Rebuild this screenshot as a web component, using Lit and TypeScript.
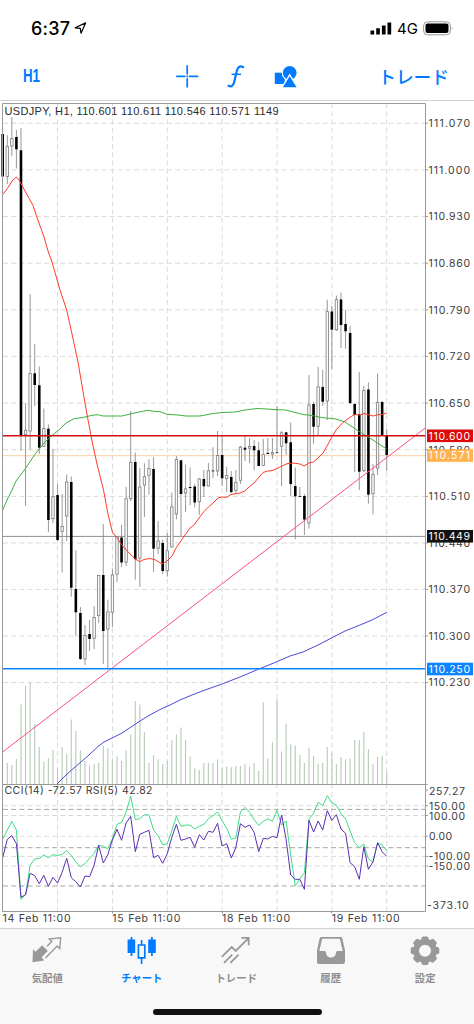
import { LitElement, html, svg, css } from "lit";
import { customElement, property } from "lit/decorators.js";

const STEP = 4.5715;
const X0 = 2.7;
const cx = (i: number) => X0 + i * STEP;

// [high, open/close top, open/close bottom, low, filled]
type Candle = [number, number, number, number, number];
const CANDLES: Candle[] = [
  [134, 134, 176.5, 176.5, 1], [135.3, 146, 176.7, 184, 0], [117, 138.3, 146.3, 156.3, 0], [130, 137, 149.3, 168.5, 1],
  [128, 150.3, 435, 450.7, 1], [403, 430.3, 435, 506, 0], [294, 373.3, 431.3, 449.5, 0], [344, 373.3, 385, 406, 1],
  [366.5, 385.3, 447.7, 454, 1], [408.5, 428.3, 446.7, 446.7, 0], [424.7, 428.7, 520, 532, 1], [449, 496.3, 519, 523, 0],
  [484, 495, 540, 541, 1], [494, 526, 531.7, 572.5, 0], [474.5, 481.7, 516.3, 541, 0], [476.5, 482, 587.7, 596.7, 1],
  [550.3, 589, 612.3, 636, 1], [607, 613, 659, 660, 1], [625, 635.3, 659.3, 665, 0], [620, 634, 639, 651, 1],
  [606, 617.3, 638.5, 649, 0], [575, 575.3, 615.7, 623, 0], [524, 575, 631, 664, 1], [599.7, 611.5, 629.3, 669, 0],
  [568.5, 574.7, 612.5, 627, 0], [536, 536.7, 574.5, 582, 0], [525, 537.5, 562.5, 567, 1], [487, 498.5, 562.5, 566, 0],
  [411, 462, 499, 501, 0], [452.5, 462, 559.3, 579.7, 1], [468, 486.7, 558.5, 587, 0], [463.3, 476.3, 485.3, 517, 0],
  [459.3, 468.3, 475.5, 494.7, 0], [457, 469, 548.7, 572, 1], [521, 540.7, 548.5, 554, 0], [539.7, 543, 571, 574, 1],
  [533, 550.5, 571, 576.7, 0], [492.5, 506.5, 547.3, 547.3, 0], [456, 459, 514.2, 519.5, 0], [460, 460.3, 494, 536, 1],
  [464.5, 488.5, 493.3, 512, 0], [467.5, 487, 488, 505, 1], [484, 486.5, 502.5, 507.5, 1], [478, 478.7, 502, 515, 0],
  [470, 479, 486.3, 497, 1], [463, 470.5, 486.3, 486.3, 0], [447.3, 470.5, 471.3, 478, 1], [431, 455.2, 471.3, 476, 0],
  [436, 455, 478.3, 486, 1], [466.7, 475.3, 479, 492, 0], [471, 477, 492, 493, 1], [470, 482, 490.7, 494, 0],
  [446, 446.8, 480.5, 484, 0], [436, 447.7, 449.7, 461, 1], [438, 446, 448.5, 463, 0], [440, 446, 450.3, 470, 1],
  [442, 450.3, 466, 466, 1], [439, 454.3, 465.7, 466, 0], [438, 452.9, 454, 454, 1], [438, 452.3, 454.3, 459, 0],
  [406, 452.4, 453.2, 453, 1], [431, 432.5, 446.5, 486, 0], [432, 432.3, 443.3, 455, 1], [422.5, 442.3, 484, 496, 1],
  [467.5, 486, 496.3, 539.3, 1], [487, 496, 496.8, 497, 1], [494, 496, 519.5, 535, 1], [375, 404.7, 523.3, 528.5, 0],
  [401.7, 404, 426.7, 443.7, 1], [367, 386.5, 426.5, 435, 0], [370, 387, 401.7, 406, 1], [299.7, 311.3, 401.3, 420, 0],
  [306, 311.5, 329.7, 369, 1], [295.5, 299.3, 330, 331, 0], [292.5, 299.5, 325, 348, 1], [309.7, 324, 331.3, 348.7, 1],
  [326, 333, 403, 404, 1], [403, 404, 415, 472, 1], [372, 414.3, 471.7, 490, 1], [386, 390.3, 471, 472, 0],
  [382.5, 389.5, 494.7, 503.5, 1], [464, 474, 494, 514.5, 0], [373.5, 402, 468.5, 475, 0], [401, 402, 435, 435, 1],
  [429, 435, 455, 471, 1],
];

const VOLUME = [
  784, 763, 765, 759, 704.5, 686, 682.7, 724, 747, 761.7, 758, 750, 767.5, 747, 754, 719.5, 731, 750.5, 761, 765.5,
  764, 763, 746, 748.5, 758.5, 756.5, 761, 750.5, 734.5, 701, 704.5, 732, 763, 755, 759.5, 764, 761, 740, 734.5,
  727.5, 740, 756.5, 768.5, 770, 763, 763, 763, 759.5, 767.5, 766.5, 767.3, 766, 766, 764, 766.3, 763, 771, 702.3,
  758.5, 742.3, 699, 751.5, 724, 744.5, 745.7, 755, 763, 748, 756, 764, 763, 747, 753, 764, 757, 759.3, 758.5, 740,
  740, 732, 749, 764, 757, 756, 772,
];

const CCI = [
  839.3, 830, 821.3, 830, 899.3, 894.5, 865.3, 859, 858.5, 855, 857.7, 854.7, 855.5, 854.5, 850.5, 855.7, 861.7, 867,
  863.5, 858.3, 853.5, 845.3, 846.3, 848.7, 838.7, 824.3, 822.3, 812.3, 796, 819.7, 818.7, 814.7, 815, 830, 835.7,
  844.7, 843.7, 830.7, 816.3, 826.3, 825, 825.3, 829, 826.3, 824.3, 818.7, 815.7, 812, 820.7, 828.3, 839.3, 838,
  812, 807.3, 812.3, 819.7, 825.3, 821.3, 818.7, 821.3, 810.3, 825, 821, 855, 886, 879, 872.7, 819, 813.3, 802.3,
  805.7, 795.7, 802.7, 805.3, 813.7, 819, 831, 842.7, 847.7, 844, 859, 862.3, 843, 845, 850.7,
];

const RSI = [
  857.7, 839.3, 835.7, 843.7, 897.3, 894.7, 873.3, 875.7, 883.7, 875.3, 886.3, 877.3, 883, 872.3, 858.3, 877.7,
  881.7, 887, 876, 876.7, 865.3, 845.3, 863, 854.7, 840, 829.3, 840.3, 823, 816.3, 851.7, 834.3, 832.3, 830.3,
  857.7, 855.3, 863.3, 853.7, 837.3, 824.3, 840.3, 839, 837.3, 847.3, 834.7, 840, 831.3, 832.3, 823.3, 846, 843.7,
  858, 847.7, 823.7, 827.3, 825, 832.3, 851.7, 838.3, 839, 836.3, 837.7, 815, 839.3, 875, 879.3, 879.3, 889.3,
  820.3, 832, 821, 830, 810.7, 820.3, 814.7, 829, 833.3, 862.7, 866.7, 879.3, 846.7, 869.3, 861.7, 842.7, 851.7,
  856.3,
];

const MA_RED =
  "3,194.5 8,187.5 12,181 16.3,177 19,180 25,191 30,200 33,205.5 36.5,216 44,237 48,251 52,262 60,290 66.7,310 72,334 78,362 86,409 92,441 97,464 103.5,490 108,514 112.5,532.5 117,537.5 121,544 126,549.7 134,558 139.5,561.7 144,559.5 150,558.5 155,559.7 162,564 167,561 172,556 176,548 185,535 190,528 194.5,524.5 199,518 204,511.5 208.5,507 213,503 218,498 222,497 227,497.3 231,494.5 240,493 245,491 249,487 254,483 263,472.5 268,471 272,470.7 277,468.5 281,466.5 287,463.7 293,463 300,464 304,466 309,463 313.5,462 318,458 323,453 327,446 332,437 336,430 343,422.5 349,418 354.5,414.5 360,415 364,413.5 373,416 378,414.7 382,414.7 386.7,413";
const MA_GREEN =
  "2.7,510 8,498 12,490 16,481 25.5,468.5 34.7,454.7 44,443 52,435.5 60,429 66,423 74,418.7 83,417.5 92,415.3 98,414.7 103,416 122,416 130,414 139,412 148,410.3 155,411.5 160,411.7 167,414.3 178,415 186,416 200,416 213,413.5 222,412.5 235,412 245,410 257,408.5 267,409 277,409.7 286,410 295,412.5 304,414.7 309,415 323,417.7 336,419 345,422 354,428 363,434 373,440 382,446 386.7,449";
const MA_BLUE =
  "57,784 66,775 74,768 89,755 98,746.5 104,742 112,738 122,733 137,723 148,716 161,709 170,705 180,700 192,695 205,690 222,684 240,677 257.7,669.5 275,662.5 290,656 303,652 318,645 331.5,638 345,631 360,625 372,620 386.7,612.3";

const PRICES: [string, number][] = [
  ["111.070", 123.2], ["111.000", 169.9], ["110.930", 216.5], ["110.860", 263.2], ["110.790", 309.8],
  ["110.720", 356.4], ["110.650", 403.1], ["110.580", 449.7], ["110.510", 496.4], ["110.440", 543],
  ["110.370", 589.4], ["110.300", 636], ["110.230", 682.5],
];
const TAGS: [string, number, string][] = [
  ["110.571", 455.5, "#ffb24d"], ["110.600", 435.8, "#dc0b0b"], ["110.449", 536.3, "#111"], ["110.250", 669, "#0a84ff"],
];
const OSC: [string, number, number][] = [
  ["257.27", 790.7, 429], ["150.00", 805.8, 429], ["100.00", 815.8, 429], ["0.00", 836.3, 429],
  ["-100.00", 856.3, 428.5], ["-150.00", 866, 428.5], ["-373.10", 905, 427],
];
const DATES: [string, number][] = [
  ["14 Feb 11:00", 2.5], ["15 Feb 11:00", 112.3], ["18 Feb 11:00", 222], ["19 Feb 11:00", 331.7],
];

const series = (v: number[]) => v.map((y, i) => `${cx(i).toFixed(1)},${y}`).join(" ");
const TOP = 102;

@customElement("price-chart")
class PriceChart extends LitElement {
  static styles = css`
    :host { display: block; height: 826px; }
    svg { display: block; }
    text { font-family: Inter, "Liberation Sans", sans-serif; font-size: 10.5px; fill: #3c3c3c; }
    .title { font-family: "Liberation Sans", Arial, sans-serif; font-size: 11px; fill: #2a2a2a; }
    .tag { fill: #fff; }
    .grid { stroke: #dadada; stroke-width: 1; stroke-dasharray: 5 3.2; fill: none; }
    .level { stroke: #a6a6a6; stroke-width: 1; stroke-dasharray: 5 3.2; }
    .frame { stroke: #999; stroke-width: 1; fill: none; }
    .volume { stroke: #bccdbc; stroke-width: 1.2; }
    .wick { stroke: #8c8c8c; stroke-width: 0.9; }
    .up { fill: #fafafa; stroke: #7c7c7c; stroke-width: 0.8; }
    .down { fill: #000; }
    .line { fill: none; stroke-width: 1; stroke-linejoin: round; }
  `;

  render() {
    const cols = [12, 24, 36, 48, 60, 72, 84].map(cx);
    return html`<svg width="474" height="826" viewBox="0 ${TOP} 474 826">
      ${cols.map((x) => svg`<line class="grid" x1=${x} x2=${x} y1="103" y2="911"/>`)}
      ${PRICES.map(([, y]) => svg`<line class="grid" x1="3" x2="425" y1=${y} y2=${y}/>`)}
      ${[805.7, 815.5, 836.3, 856.4, 866].map((y) => svg`<line class="grid" x1="3" x2="425" y1=${y} y2=${y}/>`)}
      ${[809.4, 847.7, 886].map((y) => svg`<line class="level" x1="3" x2="425" y1=${y} y2=${y}/>`)}
      ${VOLUME.map((y, i) => svg`<line class="volume" x1=${cx(i)} x2=${cx(i)} y1=${y} y2="784"/>`)}
      <line x1="3" x2="425" y1="455.7" y2="455.7" stroke="#fbd0a4"/>
      <line x1="3" x2="425" y1="536.4" y2="536.4" stroke="#8c8c8c"/>
      ${CANDLES.map(([h, a, b, l, filled], i) => {
        const x = cx(i);
        return svg`<line class="wick" x1=${x} x2=${x} y1=${h} y2=${l}/>${
          filled
            ? svg`<rect class="down" x=${x - 1.3} y=${a} width="2.6" height=${b - a}/>`
            : svg`<rect class="up" x=${x - 1.2} y=${a + 0.3} width="2.4" height=${b - a - 0.6}/>`
        }`;
      })}
      <polyline class="line" stroke="#3fb03f" points=${MA_GREEN}/>
      <polyline class="line" stroke="#ff3b28" points=${MA_RED}/>
      <polyline class="line" stroke="#4a49d8" points=${MA_BLUE}/>
      <line x1="3" x2="425" y1="751.7" y2="428.2" stroke="#fb4f86"/>
      <line x1="3" x2="425.5" y1="435.7" y2="435.7" stroke="#d01010" stroke-width="1.5"/>
      <line x1="3" x2="425.5" y1="668.8" y2="668.8" stroke="#0a84ff" stroke-width="1.6"/>
      <polyline class="line" stroke="#3fdc86" points=${series(CCI)}/>
      <polyline class="line" stroke="#5a2fb4" points=${series(RSI)}/>
      <path class="frame" d="M2.5 911.5V103.5H425.5V911.5ZM2.5 784.5H427.5"/>
      ${[...PRICES.map((p) => p[1]), 790, 805.7, 815.5, 836.3, 856.4, 866].map(
        (y) => svg`<line class="frame" x1="425" x2="428" y1=${y} y2=${y}/>`,
      )}
      <path class="frame" d="M112.5 911V913.5M222.5 911V913.5M331.5 911V913.5"/>
      <text class="title" x="4.5" y="115.2" textLength="274">USDJPY, H1, 110.601 110.611 110.546 110.571 1149</text>
      <text x="4.5" y="794.3" textLength="148">CCI(14) -72.57 RSI(5) 42.82</text>
      ${PRICES.map(([t, y]) => svg`<text x="428.5" y=${y + 3.8} textLength="41.5">${t}</text>`)}
      ${TAGS.map(
        ([t, y, c]) => svg`<rect x="427" y=${y - 6.3} width="46" height="12.6" fill=${c}/>
          <text class="tag" x="428.5" y=${y + 3.9} textLength="41.5">${t}</text>`,
      )}
      ${OSC.map(
        ([t, y, x]) =>
          svg`<text x=${x} y=${y + 3.9} textLength=${t.length === 7 ? 41.5 : t.length === 6 ? 36 : 23}>${t}</text>`,
      )}
      ${DATES.map(([t, x]) => svg`<text x=${x} y="922.4" textLength="68">${t}</text>`)}
    </svg>`;
  }
}

const ICONS: Record<string, unknown> = {
  quotes: svg`<path fill="#999" d="M2 14.3 4.6 16.7 11.2 10.3 16.8 15.9 10.6 22.3 13.2 25.4 1.5 27.2Z"/>
    <path fill="none" stroke="#999" stroke-width="1.4" d="M14.5 23 26.2 11 28.8 13.7 29.7 2.9 18.3 4 20.8 6.4 16 11.3"/>`,
  chart: svg`<path fill="#007aff" d="M2.9 4.5H4.6V2H6.4V4.5H9.2V18H6.4V21H4.6V18H1.6V4.5ZM23.4 4.5H25V2H26.8V4.5H29.8V18H26.8V21H25V18H22.2V4.5Z"/>
    <path fill="none" stroke="#007aff" stroke-width="1.7" d="M12.4 10H18.8V22.8H12.4ZM15.6 10V5M15.6 22.8V29"/>`,
  trade: svg`<path fill="none" stroke="#999" stroke-width="1.8" d="M1.8 21.8 11.7 12 15.7 16 28.3 3.3M21.4 2.9H28.7V10.2M4 27.8 12.2 19.6M10.4 27.8 18.6 19.6"/>`,
  history: svg`<path fill="#999" fill-rule="evenodd" d="M6.5 2H25.5Q27 2 27.4 3.4L30 15.5V26.5Q30 29 27.5 29H4.5Q2 29 2 26.5V15.5L4.6 3.4Q5 2 6.5 2ZM7.2 3.8 4.3 16H9.5Q11 16 11 17.6A5 5 0 0 0 21 17.6Q21 16 22.5 16H27.7L24.800 3.8Z"/>`,
  settings: svg`<circle cx="16" cy="15.7" r="9" fill="none" stroke="#999" stroke-width="6"/>
    ${[0, 45, 90, 135, 180, 225, 270, 315].map(
      (a) => svg`<rect x="12.4" y="1.4" width="7.2" height="5.5" rx="2" fill="#999" transform=${`rotate(${a} 16 15.7)`}/>`,
    )}`,
};

@customElement("tab-item")
class TabItem extends LitElement {
  @property() icon = "";
  @property() label = "";
  @property({ type: Boolean, reflect: true }) active = false;
  static styles = css`
    :host { flex: 1; display: flex; flex-direction: column; align-items: center; color: #8e8e8e; }
    :host([active]) { color: #007aff; }
    svg { display: block; width: 32px; height: 31px; }
    span { font: 700 10.4px/14px "Noto Sans CJK JP", sans-serif; white-space: nowrap; margin-top: 5px; }
  `;
  render() {
    return html`<svg viewBox="0 0 32 31">${ICONS[this.icon]}</svg><span>${this.label}</span>`;
  }
}

@customElement("app-root")
class AppRoot extends LitElement {
  static styles = css`
    :host { display: flex; flex-direction: column; width: 474px; height: 1024px; background: #fff; overflow: hidden; }
    .status { display: flex; align-items: center; height: 56px; box-sizing: border-box; padding: 0 20px 0 31px; font-family: Inter, sans-serif; color: #000; }
    .time { font-size: 18px; font-weight: 500; letter-spacing: 0.2px; width: 43px; white-space: nowrap; }
    .spacer { flex: 1; }
    .net { font-size: 15px; margin: 1px 5px 0 5px; }
    .nav { display: flex; align-items: center; height: 45px; box-sizing: border-box; padding: 0 25px 5px 23px; border-bottom: 1px solid #d0d0d0; margin-bottom: 1px; color: #007aff; }
    .nav svg { display: block; }
    .tf { font: 700 18px "Liberation Sans", sans-serif; }
    .trade { font: 500 17.7px/24px "Noto Sans CJK JP", sans-serif; white-space: nowrap; }
    .tools { display: flex; gap: 26px; margin-left: 131px; }
    .tabs { display: flex; height: 72px; border-top: 1px solid #d4d4d4; background: #f8f8f8; padding: 6px 1.5px 0 0; box-sizing: border-box; }
    .home { flex: 1; background: #f8f8f8; display: flex; justify-content: center; }
    .bar { width: 169px; height: 5.5px; border-radius: 3px; background: #111; margin-top: 9px; }
  `;
  render() {
    return html`
      <div class="status">
        <span class="time">6:37</span>
        <svg width="13" height="12" viewBox="0 0 13 12"><path d="M1.2 5.8 11.6 .9 7 11.2 6.3 6.4Z" fill="none" stroke="#000" stroke-width="1.2" stroke-linejoin="round"/></svg>
        <span class="spacer"></span>
        <svg width="22" height="14" viewBox="0 0 22 14"><path d="M.5 9.5h3.7v4H.5zM6.200 7.300h3.700v6.200H6.200zM11.900 4.600h3.700v8.900h-3.700zM17.500 1.500h3.700v12h-3.700z"/></svg>
        <span class="net">4G</span>
        <svg width="31" height="15" viewBox="0 0 31 15"><rect x=".6" y=".8" width="26.8" height="13" rx="4" fill="none" stroke="#999"/><rect x="2.5" y="2.6" width="23" height="9.4" rx="2"/><path d="M28.8 5.2Q30.3 7.3 28.8 9.4Z" fill="#999"/></svg>
      </div>
      <div class="nav">
        <svg width="22" height="22"><text class="tf" x="0" y="17" fill="#007aff" textLength="17" lengthAdjust="spacingAndGlyphs">H1</text></svg>
        <div class="tools">
          <svg width="24" height="24" viewBox="0 0 24 24"><path stroke="#007aff" stroke-width="1.7" d="M.2 12.400H9.500M12.900 12.400H22.300M11.200 1.300V10.600M11.200 14.200V23.500M10.400 12.400H12"/></svg>
          <svg width="22" height="24" viewBox="0 0 22 24"><path fill="none" stroke="#007aff" stroke-width="2.2" stroke-linecap="round" d="M17.200 3.200Q12.600 .7 11.100 6L8.100 18.200Q6.700 23.800 2.600 21.800"/><path stroke="#007aff" stroke-width="1.5" d="M5.600 10.300H15.100"/></svg>
          <svg width="24" height="24" viewBox="0 0 24 24"><path fill="#007aff" d="M.8 8.7h10V20h-10z"/><circle cx="15.7" cy="8.8" r="8" fill="#fff"/><circle cx="15.7" cy="8.8" r="6.9" fill="#007aff"/><path fill="#007aff" stroke="#fff" stroke-width="1.3" d="M15.7 10.8 23.8 24H7.6Z"/></svg>
        </div>
        <span class="spacer"></span>
        <span class="trade">トレード</span>
      </div>
      <price-chart></price-chart>
      <div class="tabs">
        <tab-item icon="quotes" label="気配値"></tab-item>
        <tab-item icon="chart" label="チャート" active></tab-item>
        <tab-item icon="trade" label="トレード"></tab-item>
        <tab-item icon="history" label="履歴"></tab-item>
        <tab-item icon="settings" label="設定"></tab-item>
      </div>
      <div class="home"><div class="bar"></div></div>
    `;
  }
}
